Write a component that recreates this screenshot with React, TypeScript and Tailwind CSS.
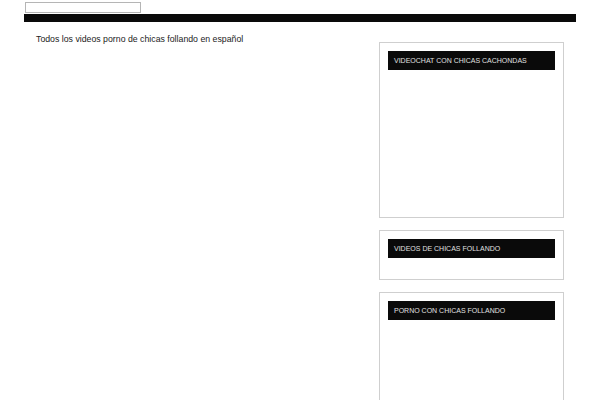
export default function App() {
  const boxes = [
    { title: "VIDEOCHAT CON CHICAS CACHONDAS", h: "h-[176px]" },
    { title: "VIDEOS DE CHICAS FOLLANDO", h: "h-[50px]" },
    { title: "PORNO CON CHICAS FOLLANDO", h: "h-[176px]" },
  ];
  return (
    <div className="min-h-screen bg-white font-['Liberation_Sans',Arial,sans-serif]">
      <div className="pl-[25px] pt-[2px]">
        <input type="text" className="block h-[11px] w-[116px] border border-[#b5b5b5] bg-white" />
      </div>
      <div className="mx-auto w-[552px]">
        <div className="mt-[1px] h-[8px] bg-[#0a0a0a]" />
        <div className="flex justify-between px-3">
          <p className="mt-[11px] text-[8.75px] leading-[12px] text-[#222]">
            Todos los videos porno de chicas follando en español
          </p>
          <aside className="mt-[20px] flex w-[185px] flex-col gap-3">
            {boxes.map((b) => (
              <div key={b.title} className={`${b.h} border border-[#cfcfcf] p-2`}>
                <div className="flex h-[19px] items-center bg-[#0a0a0a] px-[6px] pt-[1px] text-[7px] text-[#e0e0e0]">
                  {b.title}
                </div>
              </div>
            ))}
          </aside>
        </div>
      </div>
    </div>
  );
}
